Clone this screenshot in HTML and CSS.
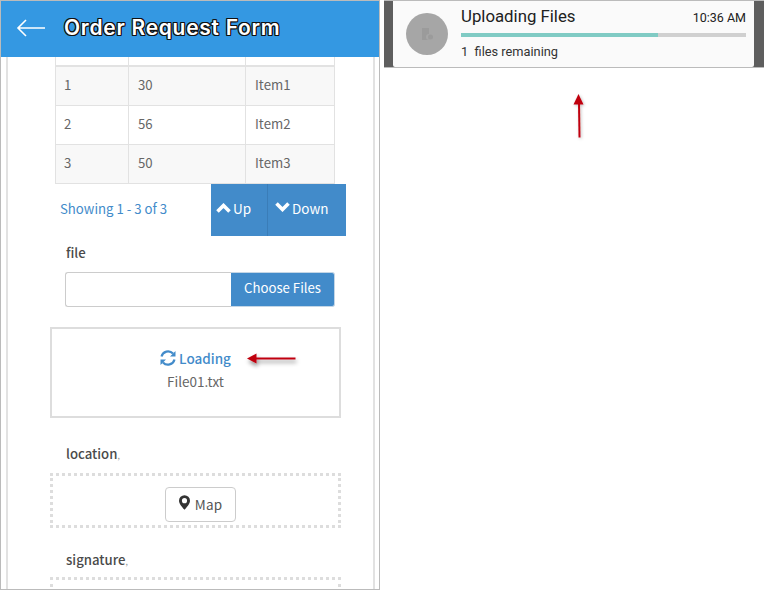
FILE: index.html
```html
<!DOCTYPE html>
<html lang="en">
<head>
<meta charset="utf-8">
<title>Order Request Form</title>
<link rel="stylesheet" href="styles.css">
</head>
<body>
<div class="stage">
  <section class="phone">
    <header class="appbar">
      <svg class="back" width="30" height="20" viewBox="0 0 30 20"><path d="M29 10H2M10 2 2 10l8 8" fill="none" stroke="#fff" stroke-width="1.6"/></svg>
      <h1 class="apptitle">Order Request Form</h1>
    </header>
    <div class="content">
      <table class="grid">
        <colgroup><col class="c1"><col class="c2"><col class="c3"></colgroup>
        <thead><tr><th></th><th></th><th></th></tr></thead>
        <tbody>
          <tr><td>1</td><td>30</td><td>Item1</td></tr>
          <tr><td>2</td><td>56</td><td>Item2</td></tr>
          <tr><td>3</td><td>50</td><td>Item3</td></tr>
        </tbody>
      </table>
      <div class="pager">
        <span class="showing">Showing 1 - 3 of 3</span>
        <div class="pager-btns">
          <button class="pbtn up"><svg width="15" height="10" viewBox="0 0 15 10"><path d="M1.500 8.500 7.500 2.500l6 6" fill="none" stroke="#fff" stroke-width="3.600"/></svg><span>Up</span></button>
          <button class="pbtn down"><svg width="15" height="10" viewBox="0 0 15 10"><path d="M1.500 1.500l6 6 6-6" fill="none" stroke="#fff" stroke-width="3.600"/></svg><span>Down</span></button>
        </div>
      </div>
      <label class="flabel file-label">file</label>
      <div class="filegroup">
        <div class="fileinput"></div>
        <div class="filebtn"><span>Choose Files</span></div>
      </div>
      <div class="loadbox">
        <div class="loading">
          <svg width="16" height="16" viewBox="0 0 16 16"><path d="M1.500 6.500A6.700 6.700 0 0 1 13 3.600M14.500 9.500A6.700 6.700 0 0 1 3 12.400" fill="none" stroke="#428bca" stroke-width="2.200"/><path d="M15.500 1v5.500H10zM.5 15V9.500H6z" fill="#428bca"/></svg>
          <span>Loading</span>
        </div>
        <div class="filename">File01.txt</div>
      </div>
      <label class="flabel loc-label">location<i class="speck">,</i></label>
      <div class="dotbox">
        <button class="mapbtn"><svg width="11" height="15" viewBox="0 0 12 16"><path fill-rule="evenodd" d="M6 0a6 6 0 0 1 6 6c0 3.500-4 7.500-6 10C4 13.500 0 9.500 0 6a6 6 0 0 1 6-6zm0 3.200a2.800 2.800 0 1 0 0 5.600 2.800 2.800 0 0 0 0-5.600z" fill="#333"/></svg><span>Map</span></button>
      </div>
      <label class="flabel sig-label">signature<i class="speck">,</i></label>
      <div class="dotbox open"></div>
    </div>
  </section>
  <section class="notice">
    <div class="card">
      <div class="avatar"><svg width="14" height="16" viewBox="0 0 14 16"><path d="M2 2h7v6a3 3 0 0 0 0 6H2z" fill="#9b9b9b"/><circle cx="10.500" cy="11" r="2.500" fill="#9b9b9b"/></svg></div>
      <div class="body">
        <div class="row"><span class="ntitle">Uploading Files</span><span class="time">10:36 AM</span></div>
        <div class="track"><div class="fill" style="width:69%"></div></div>
        <div class="remain">1&nbsp; files remaining</div>
      </div>
    </div>
  </section>
  <svg class="callout" width="766" height="590" viewBox="0 0 766 590">
    <defs>
      <filter id="sh" x="-30%" y="-200%" width="160%" height="500%"><feDropShadow dx="1" dy="3" stdDeviation="2" flood-color="#000" flood-opacity=".45"/></filter>
      <filter id="sh2" x="-300%" y="-20%" width="700%" height="140%"><feDropShadow dx="1" dy="1" stdDeviation="1.500" flood-color="#000" flood-opacity=".25"/></filter>
    </defs>
    <g filter="url(#sh)"><path d="M295.500 358.500H254" stroke="#c00010" stroke-width="2"/><path d="M247 358.500l9.500-5v10z" fill="#c00010"/></g>
    <g filter="url(#sh2)"><path d="M579.500 137.500 579 102" stroke="#c00010" stroke-width="2"/><path d="M578.500 94l5 10.500h-10z" fill="#c00010"/></g>
  </svg>
</div>
</body>
</html>
```
FILE: styles.css
```css
* { box-sizing: border-box; }
html, body { margin: 0; padding: 0; background: #fff; }
body { font-family: "Noto Sans CJK JP", "Noto Sans", sans-serif; color: #555; }
.stage { position: relative; width: 766px; height: 590px; display: flex; align-items: flex-start; overflow: hidden; }

.phone { width: 380px; height: 590px; border: 1px solid #bbb; display: flex; flex-direction: column; overflow: hidden; flex: none; }
.appbar { height: 56px; background: #3498e2; display: flex; align-items: center; padding-left: 15px; flex: none; }
.back { flex: none; margin-right: 18px; margin-top: -3px; }
.apptitle { margin: 0 0 3px; font: 600 21px/1 "Inter", "Liberation Sans", sans-serif; letter-spacing: .72px; color: #fff; white-space: nowrap;
  text-shadow: -1px 0 #111, 1px 0 #111, 0 -1px #111, 0 1px #111, -1px -1px #111, 1px 1px #111, 1px -1px #111, -1px 1px #111; }

.content { margin: 0 5px; height: 533px; border-left: 2px solid #e2e2e2; border-right: 2px solid #e2e2e2; padding: 0 0 0 47px; overflow: hidden; flex: none; width: 369px; }

.grid { border-collapse: collapse; table-layout: fixed; width: 279px; font-size: 13.200px; line-height: 20px; color: #666; }
.grid .c1 { width: 73px; } .grid .c2 { width: 117px; } .grid .c3 { width: 89px; }
.grid th { height: 9px; padding: 0; border: 1px solid #e2e2e2; border-top: 0; border-bottom-width: 2px; }
.grid td { height: 39px; padding: 0 9px 2px; border: 1px solid #e2e2e2; }
.grid td:first-child { padding-left: 8px; }
.grid tbody tr:nth-child(odd) td { background: #f8f8f8; }

.pager { display: flex; align-items: center; height: 52px; }
.showing { width: 156px; padding: 0 0 3px 5px; font-size: 13.200px; color: #428bca; white-space: nowrap; }
.pager-btns { display: flex; height: 52px; }
.pbtn { border: 0; margin: 0; padding: 0; background: #428bca; color: #fff; font: 13.500px "Noto Sans CJK JP", "Noto Sans", sans-serif; display: flex; align-items: center; gap: 2px; height: 52px; }
.pbtn span { padding-bottom: 4px; }
.pbtn svg { margin-bottom: 4px; }
.pbtn.up { width: 57px; padding-left: 5px; border-right: 1px solid #3a7db8; }
.pbtn.down { width: 78px; padding-left: 7px; }
.pbtn.down svg { margin-bottom: 6px; }

.flabel { display: block; font-size: 13.200px; font-weight: 500; line-height: 20px; color: #4a4a4a; margin-left: 11px; }
.speck { font-style: normal; font-size: 8px; color: #999; }
.file-label { margin-top: 7px; }
.filegroup { display: flex; width: 270px; height: 35px; margin: 9px 0 0 10px; }
.fileinput { width: 166px; border: 1px solid #ccc; border-right: 0; border-radius: 3px 0 0 3px; background: #fff; }
.filebtn { width: 104px; background: #428bca; color: #fff; font-size: 13.200px; display: flex; align-items: center; justify-content: center; border-radius: 0 3px 3px 0; border: 1px solid #c4d6e6; border-left: 0; }
.filebtn span { padding-bottom: 3px; }

.loadbox { width: 291px; height: 91px; margin: 20px 0 0 -5px; border: 2px solid #ddd; display: flex; flex-direction: column; align-items: center; padding-top: 18px; }
.loading { display: flex; align-items: center; gap: 3px; color: #428bca; font-size: 13.500px; font-weight: 500; line-height: 22px; }
.filename { font-size: 13.500px; line-height: 20px; margin-top: 2px; color: #666; }

.loc-label { margin-top: 26px; }
.sig-label { margin-top: 22px; }
.dotbox { width: 291px; height: 55px; margin: 7px 0 0 -5px; border: 3px dotted #ddd; display: flex; align-items: center; justify-content: center; flex: none; }
.dotbox.open { height: 40px; margin-top: 5px; }
.mapbtn { width: 71px; height: 35px; background: #fff; border: 1px solid #ccc; border-radius: 4px; color: #555; font: 13.500px "Noto Sans CJK JP", "Noto Sans", sans-serif; display: flex; align-items: center; justify-content: center; gap: 5px; padding: 0 0 0 1px; margin: 8px 0 0 9px; letter-spacing: .2px; }
.mapbtn svg { margin-bottom: 3px; }
.mapbtn span { padding-bottom: 1px; }

.notice { width: 380px; height: 68px; margin-left: 4px; background: #5e5e5e; padding: 0 10px 0 9px; border-top: 1px solid #bbb; border-bottom: 1px solid #bbb; flex: none; }
.card { height: 66px; background: #fafafa; display: flex; align-items: center; padding: 0 8px 0 13px; border-radius: 0 0 2px 2px; }
.avatar { width: 42px; height: 42px; border-radius: 50%; background: #a6a6a6; margin-right: 13px; display: flex; align-items: center; justify-content: center; flex: none; }
.body { flex: 1; min-width: 0; align-self: flex-start; }
.row { display: flex; justify-content: space-between; align-items: baseline; height: 30px; line-height: 30px; font-family: "Roboto", sans-serif; color: #212121; }
.ntitle { font-size: 16.800px; }
.time { font-size: 12.500px; }
.track { height: 4px; background: #d0d0d0; margin-top: 2px; }
.fill { height: 4px; background: #80cbc4; }
.remain { font: 12.800px/18px "Roboto", sans-serif; color: #333; margin-top: 6px; }

.callout { position: absolute; left: 0; top: 0; pointer-events: none; }
```
